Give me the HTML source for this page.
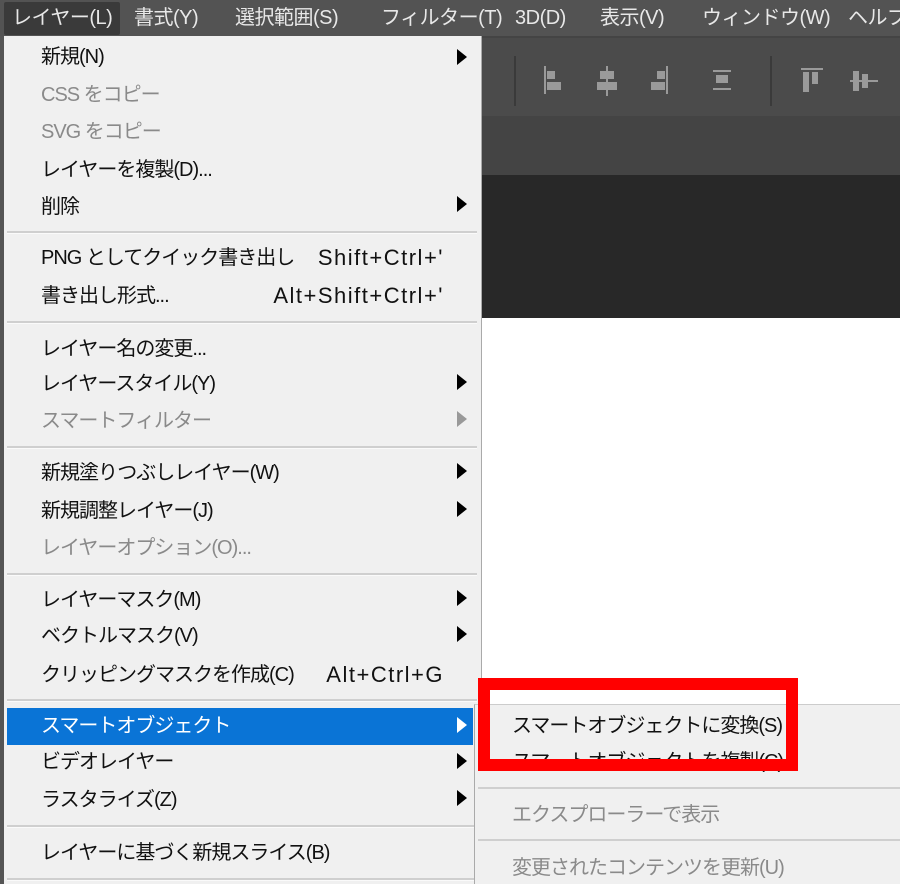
<!DOCTYPE html><html><head><meta charset="utf-8"><style>
*{margin:0;padding:0;box-sizing:border-box}
body{width:900px;height:884px;overflow:hidden;position:relative;background:#fff;font-family:"Liberation Sans","Noto Sans CJK JP",sans-serif;font-size:20px;letter-spacing:-1px}
.a{position:absolute}
.t{position:absolute;white-space:nowrap;line-height:24px;color:#111}
.g{color:#8a8a8a}
.sc{position:absolute;white-space:nowrap;line-height:24px;right:456px;color:#111;font-size:22px;letter-spacing:1.5px}
.sep{position:absolute;left:7px;width:470px;height:3px;background:#cfcfcf;border-bottom:1px solid #fafafa}
.ar{position:absolute;left:457px;width:0;height:0;border-top:8px solid transparent;border-bottom:8px solid transparent;border-left:10px solid #000}
.mb{position:absolute;top:6px;color:#e8e8e8;line-height:24px;white-space:nowrap;letter-spacing:-0.5px}
</style></head><body>
<div class="a" style="left:0;top:0;width:900px;height:36px;background:#535353"></div>
<div class="a" style="left:4px;top:2px;width:116px;height:33px;background:#3a3a3a;border-radius:2px"></div>
<div class="mb" style="left:12px">レイヤー(L)</div>
<div class="mb" style="left:134px">書式(Y)</div>
<div class="mb" style="left:235px">選択範囲(S)</div>
<div class="mb" style="left:381px">フィルター(T)</div>
<div class="mb" style="left:515px">3D(D)</div>
<div class="mb" style="left:600px">表示(V)</div>
<div class="mb" style="left:702px">ウィンドウ(W)</div>
<div class="mb" style="left:848px">ヘルプ</div>
<div class="a" style="left:0;top:36px;width:900px;height:80px;background:#4b4b4b;border-top:2px solid #444"></div>
<div class="a" style="left:514px;top:56px;width:2px;height:50px;background:#3a3a3a"></div>
<div class="a" style="left:770px;top:56px;width:2px;height:50px;background:#3a3a3a"></div>
<div class="a" style="left:544px;top:66px;width:2px;height:28px;background:#9a9a9a"></div>
<div class="a" style="left:547px;top:71px;width:8px;height:8px;background:#9a9a9a"></div>
<div class="a" style="left:547px;top:82px;width:14px;height:8px;background:#9a9a9a"></div>
<div class="a" style="left:606px;top:66px;width:2px;height:30px;background:#9a9a9a"></div>
<div class="a" style="left:600px;top:71px;width:14px;height:8px;background:#9a9a9a"></div>
<div class="a" style="left:597px;top:82px;width:20px;height:8px;background:#9a9a9a"></div>
<div class="a" style="left:666px;top:66px;width:2px;height:28px;background:#9a9a9a"></div>
<div class="a" style="left:657px;top:71px;width:8px;height:8px;background:#9a9a9a"></div>
<div class="a" style="left:651px;top:82px;width:14px;height:8px;background:#9a9a9a"></div>
<div class="a" style="left:713px;top:70px;width:18px;height:2px;background:#9a9a9a"></div>
<div class="a" style="left:716px;top:75px;width:12px;height:8px;background:#9a9a9a"></div>
<div class="a" style="left:713px;top:88px;width:18px;height:2px;background:#9a9a9a"></div>
<div class="a" style="left:801px;top:68px;width:22px;height:2px;background:#9a9a9a"></div>
<div class="a" style="left:803px;top:72px;width:6px;height:20px;background:#9a9a9a"></div>
<div class="a" style="left:812px;top:72px;width:6px;height:12px;background:#9a9a9a"></div>
<div class="a" style="left:850px;top:80px;width:28px;height:2px;background:#9a9a9a"></div>
<div class="a" style="left:853px;top:71px;width:6px;height:20px;background:#9a9a9a"></div>
<div class="a" style="left:862px;top:74px;width:6px;height:14px;background:#9a9a9a"></div>
<div class="a" style="left:0;top:116px;width:900px;height:59px;background:#444"></div>
<div class="a" style="left:0;top:175px;width:900px;height:143px;background:#282828"></div>

<div class="a" style="left:0;top:36px;width:4px;height:848px;background:#555"></div>
<div class="a" style="left:4px;top:36px;width:478px;height:848px;background:#f0f0f0;border-right:1px solid #aaa"></div>
<div class="a" style="left:7px;top:708px;width:466px;height:37px;background:#0a74d6"></div>

<div class="t" style="left:41px;top:45px">新規(N)</div><div class="ar" style="top:49px"></div>
<div class="t g" style="left:41px;top:83px">CSS をコピー</div>
<div class="t g" style="left:41px;top:120px">SVG をコピー</div>
<div class="t" style="left:41px;top:158px">レイヤーを複製(D)...</div>
<div class="t" style="left:41px;top:195px">削除</div><div class="ar" style="top:196px"></div>
<div class="sep" style="top:231px"></div>
<div class="t" style="left:41px;top:246px">PNG としてクイック書き出し</div><div class="sc" style="top:246px">Shift+Ctrl+'</div>
<div class="t" style="left:41px;top:284px">書き出し形式...</div><div class="sc" style="top:284px">Alt+Shift+Ctrl+'</div>
<div class="sep" style="top:321px"></div>
<div class="t" style="left:41px;top:337px">レイヤー名の変更...</div>
<div class="t" style="left:41px;top:372px">レイヤースタイル(Y)</div><div class="ar" style="top:374px"></div>
<div class="t g" style="left:41px;top:409px">スマートフィルター</div><div class="ar" style="top:411px;border-left-color:#999"></div>
<div class="sep" style="top:446px"></div>
<div class="t" style="left:41px;top:461px">新規塗りつぶしレイヤー(W)</div><div class="ar" style="top:463px"></div>
<div class="t" style="left:41px;top:499px">新規調整レイヤー(J)</div><div class="ar" style="top:501px"></div>
<div class="t g" style="left:41px;top:536px">レイヤーオプション(O)...</div>
<div class="sep" style="top:573px"></div>
<div class="t" style="left:41px;top:588px">レイヤーマスク(M)</div><div class="ar" style="top:590px"></div>
<div class="t" style="left:41px;top:624px">ベクトルマスク(V)</div><div class="ar" style="top:626px"></div>
<div class="t" style="left:41px;top:663px">クリッピングマスクを作成(C)</div><div class="sc" style="top:663px">Alt+Ctrl+G</div>
<div class="sep" style="top:699px"></div>
<div class="t" style="left:41px;top:714px;color:#fff">スマートオブジェクト</div><div class="ar" style="top:717px;border-left-color:#fff"></div>
<div class="t" style="left:41px;top:750px">ビデオレイヤー</div><div class="ar" style="top:753px"></div>
<div class="t" style="left:41px;top:788px">ラスタライズ(Z)</div><div class="ar" style="top:790px"></div>
<div class="sep" style="top:825px"></div>
<div class="t" style="left:41px;top:841px">レイヤーに基づく新規スライス(B)</div>
<div class="sep" style="top:878px"></div>

<div class="a" style="left:474px;top:704px;width:426px;height:180px;background:#f0f0f0;border-left:1px solid #aaa;border-top:1px solid #ccc"></div>
<div class="t" style="left:512px;top:714px">スマートオブジェクトに変換(S)</div>
<div class="t" style="left:512px;top:750px">スマートオブジェクトを複製(C)</div>
<div class="a" style="left:478px;top:787px;width:422px;height:2px;background:#cfcfcf"></div>
<div class="t g" style="left:512px;top:803px">エクスプローラーで表示</div>
<div class="a" style="left:478px;top:839px;width:422px;height:2px;background:#cfcfcf"></div>
<div class="t g" style="left:512px;top:856px">変更されたコンテンツを更新(U)</div>

<div class="a" style="left:478px;top:678px;width:320px;height:93px;border:12px solid #ff0000"></div>
</body></html>
